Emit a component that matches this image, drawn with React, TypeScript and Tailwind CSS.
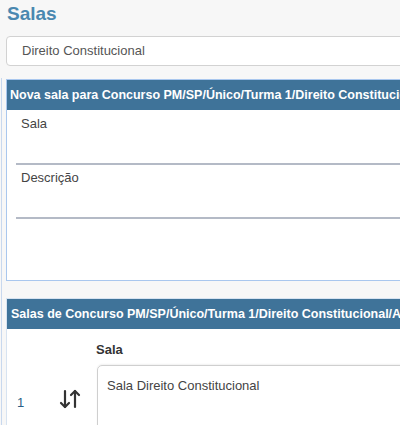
import React from 'react';
import { ArrowDownUp } from 'lucide-react';

function Field({ label }: { label: string }) {
  return (
    <div className="h-[54px] flex flex-col">
      <span className="pl-[5px] pt-[5px] text-[13px] leading-[15px] text-[#444]">{label}</span>
      <div className="mt-auto h-[2px] bg-[#b4bac6]" />
    </div>
  );
}

export default function App() {
  return (
    <div className="w-[400px] h-[425px] overflow-hidden bg-[#f7f7f7] font-['Liberation_Sans',Arial,sans-serif]">
      {/* Page title */}
      <h1 className="pl-[7px] pt-[3px] h-[36px] text-[19px] leading-[22px] font-bold text-[#4a88b0]">Salas</h1>

      {/* Discipline select */}
      <div className="ml-[6px] w-[600px] h-[30px] flex items-center pl-[15px] bg-white border border-[#d2d2d2] rounded-l-[4px] text-[13px] text-[#555]">
        Direito Constitucional
      </div>

      <div className="mt-[12px] ml-[1px] border-l border-[#c8d8ee] pl-[4px] pt-[1px] w-[700px]">
        {/* New room panel */}
        <div className="border-[1.5px] border-[#a9c7ee] bg-white">
          <div className="h-[30px] bg-[#3f7399] flex items-center pl-[3px] text-[12.5px] font-bold text-white whitespace-nowrap">
            Nova sala para Concurso PM/SP/Único/Turma 1/Direito Constitucional/Aula
          </div>
          <div className="h-[170px] pl-[9px] pt-[1px]">
            <Field label="Sala" />
            <Field label="Descrição" />
          </div>
        </div>

        {/* Existing rooms */}
        <div className="mt-[17px] border-t border-l border-[#d7e3f1] bg-white">
          <div className="h-[30px] bg-[#3f7399] flex items-center pl-[4px] text-[12.5px] font-bold text-white whitespace-nowrap">
            Salas de Concurso PM/SP/Único/Turma 1/Direito Constitucional/Aula
          </div>
          <div className="pt-[13px] pl-[89px] text-[13px] font-bold text-[#333] leading-[15px]">Sala</div>
          <div className="flex mt-[8px]">
            <div className="w-[50px] pl-[10px] pt-[28px] text-[13px] text-[#2a5e86]">1</div>
            <div className="w-[40px] pt-[22px] pl-[1px] text-[#333]">
              <ArrowDownUp size={24} strokeWidth={2.2} />
            </div>
            <div className="flex-1 h-[80px] border border-[#cfcfcf] rounded-tl-[5px] shadow-[0_-1px_2px_rgba(0,0,0,0.06)] pl-[9px] pt-[10px] text-[13px] text-[#444]">
              Sala Direito Constitucional
            </div>
          </div>
        </div>
      </div>
    </div>
  );
}
